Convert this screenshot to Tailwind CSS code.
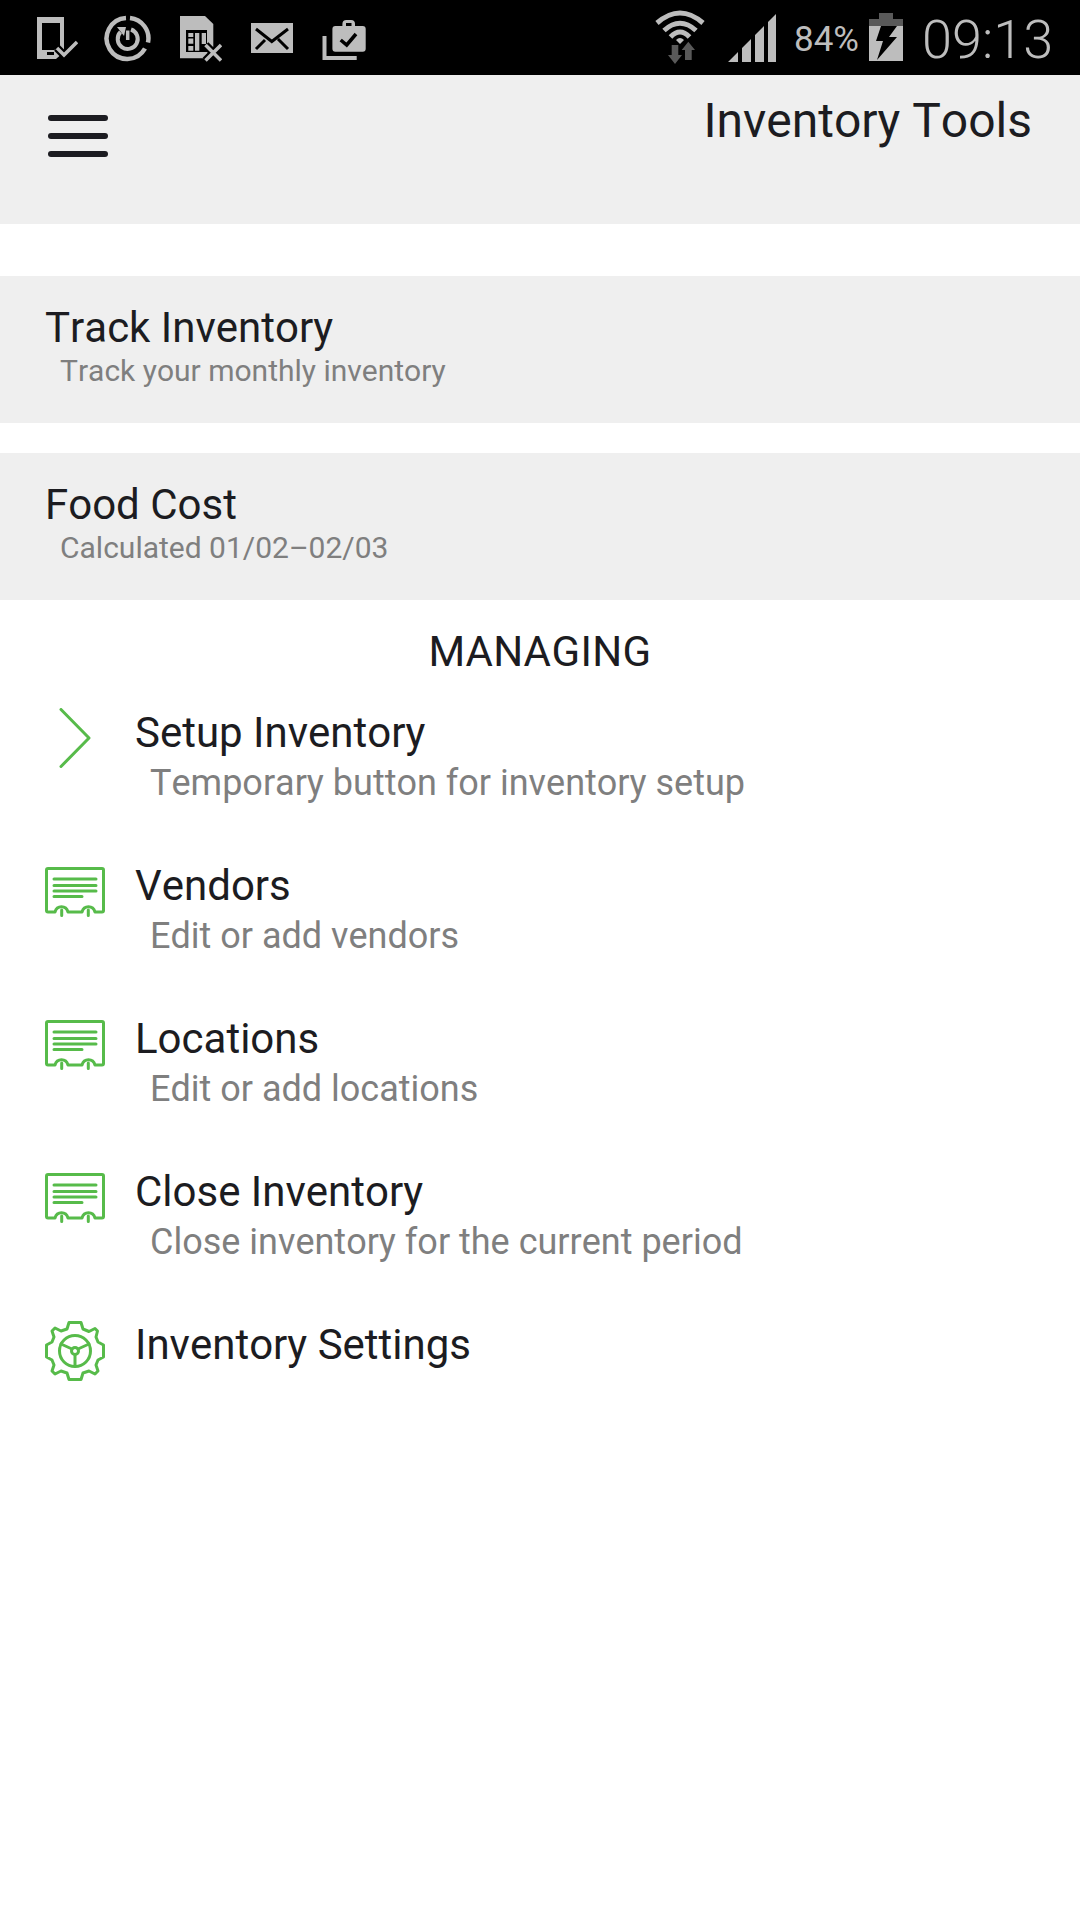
<!DOCTYPE html>
<html lang="en">
<head>
    <meta charset="UTF-8">
    <meta name="viewport" content="width=device-width, initial-scale=1.0">
    <title>Inventory Tools</title>
    <script src="https://cdn.jsdelivr.net/npm/@tailwindcss/browser@4"></script>
</head>
<body class="bg-white w-[1080px] h-[1920px] overflow-hidden font-['Roboto',sans-serif] [font-kerning:none] text-[#1c1c21]">
    <!-- status bar -->
    <div class="h-[75px] bg-black flex items-start text-[#bdbdbd]">
        <svg class="ml-[36px] mt-[17px] w-[42px] h-[44px]" viewBox="0 0 42 44" fill="none">
            <path d="M1 0H28V35L20 42H1Z" fill="#bdbdbd"/>
            <path d="M6 6H24V31L18 33H6Z" fill="#000"/>
            <path d="M11 35H18V38H11Z" fill="#000"/>
            <path d="M21 31L28 38L41 25" stroke="#000" stroke-width="8"/>
            <path d="M21 31L28 38L41 25" stroke="#bdbdbd" stroke-width="3.500"/>
        </svg>
        <svg class="ml-[26px] mt-[15px] w-[47px] h-[47px]" viewBox="0 0 47 47" fill="none" stroke="#bdbdbd">
            <path d="M22 3A20.500 20.500 0 1 0 41 33.500" stroke-width="4.500"/>
            <path d="M26 3A20.500 20.500 0 0 1 44 27.500" stroke-width="4.500"/>
            <path d="M27 14.500A10 10 0 1 1 16.500 17" stroke-width="4"/>
            <path d="M23.700 15.500V25" stroke-width="3.500"/>
            <path d="M13 12H22L20 21Z" fill="#bdbdbd" stroke="none"/>
        </svg>
        <svg class="ml-[29px] mt-[16px] w-[42px] h-[46px]" viewBox="0 0 42 46">
            <path d="M0 0H25L33.300 8V42.300H0Z" fill="#bdbdbd"/>
            <path d="M6 14H27V36H6Z" fill="#000"/>
            <path d="M8.300 17H13.300V21H8.300Z M8.300 22.600H13.300V27.700H8.300Z M8.300 30H13.300V34.700H8.300Z M15 17H19.300V34.700H15Z M21.700 17H26V28H21.700Z" fill="#bdbdbd"/>
            <path d="M25.500 29L41 44.500M41 29L25.500 44.500" stroke="#000" stroke-width="8"/>
            <path d="M25.500 29L41 44.500M41 29L25.500 44.500" stroke="#bdbdbd" stroke-width="3.500"/>
        </svg>
        <svg class="ml-[29px] mt-[23px] w-[42px] h-[30px]" viewBox="0 0 42 30" fill="none">
            <rect width="42" height="30" fill="#bdbdbd"/>
            <path d="M5 6L20.800 18.500L37 6M5 26L14 17M37 26L27 16" stroke="#000" stroke-width="3"/>
        </svg>
        <svg class="ml-[29px] mt-[20px] w-[44px] h-[40px]" viewBox="0 0 44 40" fill="none">
            <path d="M2.500 16V38H34.700" stroke="#bdbdbd" stroke-width="4"/>
            <path d="M10.400 9Q10.400 6 13.400 6H20.400V4Q20.400 0 24.400 0H29Q33 0 33 4V6H40.700Q43.700 6 43.700 9V28.700Q43.700 31.700 40.700 31.700H13.400Q10.400 31.700 10.400 28.700Z" fill="#bdbdbd"/>
            <path d="M24 3H29.500V6H24Z" fill="#000"/>
            <path d="M18.700 20L24.700 25L34 14" stroke="#000" stroke-width="3.500"/>
        </svg>

        <svg class="ml-[289px] mt-[10px] w-[50px] h-[55px]" viewBox="0 0 50 55" fill="none">
            <path d="M2 13Q25 -7 48 13" stroke="#bdbdbd" stroke-width="5"/>
            <path d="M9 20.500Q25 6 41 20.500" stroke="#bdbdbd" stroke-width="5"/>
            <path d="M15.500 27Q25 17 34.500 27" stroke="#bdbdbd" stroke-width="5"/>
            <path d="M21 30Q25 26 29 30L25 34Z" fill="#bdbdbd"/>
            <path d="M16.700 35H23.300V45H27L20 54L13 45H16.700Z" fill="#595959"/>
            <path d="M33.300 31.700L40 40H36.700V50H30V40H26.700Z" fill="#595959"/>
        </svg>
        <svg class="ml-[23px] mt-[14px] w-[48px] h-[48px]" viewBox="0 0 48 48" fill="#bdbdbd">
            <path d="M0 48L10 38V48Z M14 34L23 25V48H14Z M27 21L36 12V48H27Z M40 8L48 0V48H40Z"/>
        </svg>
        <span class="ml-[18px] mt-[23px] w-[75px] text-[35px] leading-[34px]">84%</span>
        <svg class="mt-[13px] w-[34px] h-[48px]" viewBox="0 0 34 48">
            <path d="M10 0H24V6H34V13H0V6H10Z" fill="#595959"/>
            <path d="M0 13H34V48H0Z" fill="#bdbdbd"/>
            <path d="M12 13H28L20 24H28L8 47L14 28H7Z" fill="#000"/>
        </svg>
        <span class="ml-[19px] mt-[11px] text-[54px] leading-[58px] font-light">09:13</span>
    </div>

    <!-- header -->
    <div class="h-[149px] bg-[#efefef] flex justify-between pl-[48px] pr-[48px]">
        <div class="flex flex-col gap-[12px] pt-[40px]">
            <div class="w-[60px] h-[6px] rounded-full bg-[#1c1c21]"></div>
            <div class="w-[60px] h-[6px] rounded-full bg-[#1c1c21]"></div>
            <div class="w-[60px] h-[6px] rounded-full bg-[#1c1c21]"></div>
        </div>
        <h1 class="text-[48px] leading-none pt-[22px]">Inventory Tools</h1>
    </div>

    <!-- tool cards -->
    <div class="mt-[52px] h-[147px] bg-[#efefef] pl-[45px] pt-[27px]">
        <div class="text-[42px] leading-[50px]">Track Inventory</div>
        <div class="pl-[15px] text-[30px] leading-[36px] text-[#7f7f7f]">Track your monthly inventory</div>
    </div>
    <div class="mt-[30px] h-[147px] bg-[#efefef] pl-[45px] pt-[27px]">
        <div class="text-[42px] leading-[50px]">Food Cost</div>
        <div class="pl-[15px] text-[30px] leading-[36px] text-[#7f7f7f]">Calculated 01/02–02/03</div>
    </div>

    <div class="mt-[27px] text-center text-[42px] leading-[50px] tracking-[0.4px]">MANAGING</div>

    <!-- managing list -->
    <div class="mt-[31px] flex flex-col pl-[45px]">
        <div class="h-[153px] flex gap-[30px]">
            <svg class="w-[60px] h-[60px]" viewBox="0 0 60 60" fill="none" stroke="#57bb4a" stroke-width="3" stroke-linecap="round" stroke-linejoin="round">
                <path d="M16 1.500L44 30L16 58.500"/>
            </svg>
            <div>
                <div class="text-[42px] leading-[50px]">Setup Inventory</div>
                <div class="pl-[15px] text-[36px] leading-[50px] text-[#7f7f7f]">Temporary button for inventory setup</div>
            </div>
        </div>
        <div class="h-[153px] flex gap-[30px]">
            <svg class="w-[60px] h-[50px] mt-[6px]" viewBox="0 0 60 50" fill="none" stroke="#57bb4a" stroke-width="3" stroke-linecap="round" stroke-linejoin="round">
                <path d="M3 1.500H57Q58.500 1.500 58.500 3V43.500Q58.500 45 57 45H50C48 38 39 38 37 45H23C21 38 12 38 10 45H3Q1.500 45 1.500 43.500V3Q1.500 1.500 3 1.500Z"/>
                <path d="M9 12H51M9 18.500H51M9 24H51M9 29.500H37M16.700 43V48.500M43.300 43V48.500"/>
            </svg>
            <div>
                <div class="text-[42px] leading-[50px]">Vendors</div>
                <div class="pl-[15px] text-[36px] leading-[50px] text-[#7f7f7f]">Edit or add vendors</div>
            </div>
        </div>
        <div class="h-[153px] flex gap-[30px]">
            <svg class="w-[60px] h-[50px] mt-[6px]" viewBox="0 0 60 50" fill="none" stroke="#57bb4a" stroke-width="3" stroke-linecap="round" stroke-linejoin="round">
                <path d="M3 1.500H57Q58.500 1.500 58.500 3V43.500Q58.500 45 57 45H50C48 38 39 38 37 45H23C21 38 12 38 10 45H3Q1.500 45 1.500 43.500V3Q1.500 1.500 3 1.500Z"/>
                <path d="M9 12H51M9 18.500H51M9 24H51M9 29.500H37M16.700 43V48.500M43.300 43V48.500"/>
            </svg>
            <div>
                <div class="text-[42px] leading-[50px]">Locations</div>
                <div class="pl-[15px] text-[36px] leading-[50px] text-[#7f7f7f]">Edit or add locations</div>
            </div>
        </div>
        <div class="h-[153px] flex gap-[30px]">
            <svg class="w-[60px] h-[50px] mt-[6px]" viewBox="0 0 60 50" fill="none" stroke="#57bb4a" stroke-width="3" stroke-linecap="round" stroke-linejoin="round">
                <path d="M3 1.500H57Q58.500 1.500 58.500 3V43.500Q58.500 45 57 45H50C48 38 39 38 37 45H23C21 38 12 38 10 45H3Q1.500 45 1.500 43.500V3Q1.500 1.500 3 1.500Z"/>
                <path d="M9 12H51M9 18.500H51M9 24H51M9 29.500H37M16.700 43V48.500M43.300 43V48.500"/>
            </svg>
            <div>
                <div class="text-[42px] leading-[50px]">Close Inventory</div>
                <div class="pl-[15px] text-[36px] leading-[50px] text-[#7f7f7f]">Close inventory for the current period</div>
            </div>
        </div>
        <div class="h-[153px] flex gap-[30px]">
            <svg class="w-[60px] h-[60px] mt-[1px]" viewBox="0 0 60 60" fill="none" stroke="#57bb4a" stroke-width="3" stroke-linecap="round" stroke-linejoin="round">
                <path d="M24 1.500H36L38 8L44 10.500L50 7.500L52.500 10L51 16L53 21L58.500 24V36L53 39L51 44L53 50L50 53L44 50L38 52L36 58.500H24L22 52L16 50L10 53L7 50L9 44L7 39L1.500 36V24L7 21L9 16L7 10L10 7L16 10L22 8Z"/>
                <circle cx="30" cy="30" r="15.500"/>
                <circle cx="30" cy="30" r="3.500"/>
                <path d="M33 28L44 23M27 28L16 23M30 33.500V45"/>
            </svg>
            <div>
                <div class="text-[42px] leading-[50px]">Inventory Settings</div>
            </div>
        </div>
    </div>
</body>
</html>
